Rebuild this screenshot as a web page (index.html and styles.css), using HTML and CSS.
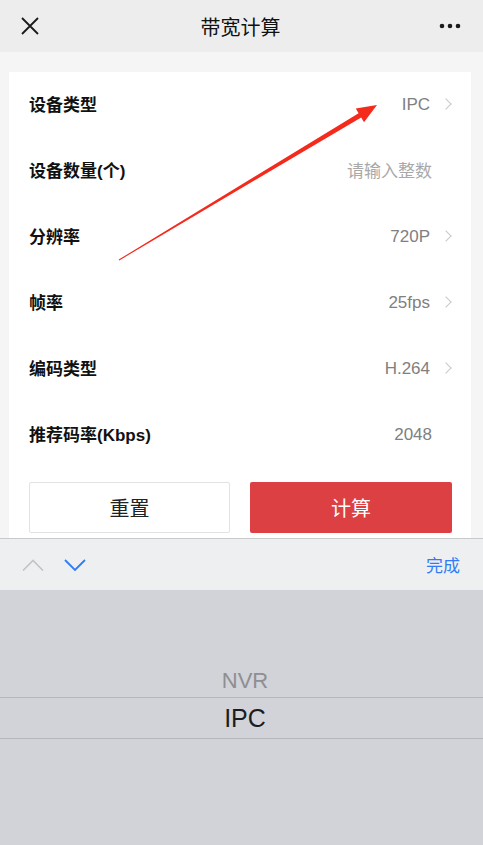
FILE: index.html
```html
<!DOCTYPE html>
<html lang="zh-CN">
  <head>
    <meta charset="UTF-8" />
    <title>带宽计算</title>
    <link rel="stylesheet" href="styles.css">
  </head>
  <body>
    <div class="screen">
      <header class="navbar">
        <svg class="nav-close" width="20" height="20" viewBox="0 0 20 20">
          <path d="M2 2 L18 18 M18 2 L2 18" stroke="#1a1a1a" stroke-width="1.8" fill="none" />
        </svg>
        <div class="nav-title">带宽计算</div>
        <svg class="nav-more" width="22" height="6" viewBox="0 0 22 6">
          <circle cx="3" cy="3" r="2.3" fill="#1a1a1a" />
          <circle cx="11" cy="3" r="2.3" fill="#1a1a1a" />
          <circle cx="19" cy="3" r="2.3" fill="#1a1a1a" />
        </svg>
      </header>

      <main class="content">
        <div class="card">
          <div class="row">
            <span class="label">设备类型</span>
            <span class="value">IPC</span>
            <span class="chevron"></span>
          </div>
          <div class="row">
            <span class="label">设备数量(个)</span>
            <span class="value placeholder">请输入整数</span>
            <span class="chevron none"></span>
          </div>
          <div class="row">
            <span class="label">分辨率</span>
            <span class="value">720P</span>
            <span class="chevron"></span>
          </div>
          <div class="row">
            <span class="label">帧率</span>
            <span class="value">25fps</span>
            <span class="chevron"></span>
          </div>
          <div class="row">
            <span class="label">编码类型</span>
            <span class="value">H.264</span>
            <span class="chevron"></span>
          </div>
          <div class="row">
            <span class="label">推荐码率(Kbps)</span>
            <span class="value">2048</span>
            <span class="chevron none"></span>
          </div>

          <div class="actions">
            <button class="btn btn-reset">重置</button>
            <button class="btn btn-calc">计算</button>
          </div>
        </div>
      </main>

      <div class="toolbar">
        <svg width="22" height="12" viewBox="0 0 22 12">
          <path d="M1 11.5 L11 1.5 L21 11.5" stroke="#c4c4c6" stroke-width="1.6" fill="none" />
        </svg>
        <svg class="tb-down" width="22" height="12" viewBox="0 0 22 12">
          <path d="M1 1 L11 11 L21 1" stroke="#2f7cf6" stroke-width="1.8" fill="none" />
        </svg>
        <span class="tb-done">完成</span>
      </div>

      <div class="picker">
        <div class="pick-item">NVR</div>
        <div class="pick-item selected">IPC</div>
      </div>

      <!-- 标注箭头 -->
      <svg class="annot" width="483" height="845" viewBox="0 0 483 845">
        <polygon fill="#f42a1c"
          points="118.7,259.6 358.6,113.2 355.8,108.4 377,105 364,122.2 361.2,117.4 119.3,260.4" />
      </svg>
    </div>
  </body>
</html>
```

FILE: styles.css
```css
body {
  margin: 0;
  padding: 0;
  font-family: "Liberation Sans", "Noto Sans CJK SC", sans-serif;
}
.screen {
  position: relative;
  width: 483px;
  height: 845px;
  overflow: hidden;
  background: #f5f5f5;
  display: flex;
  flex-direction: column;
}
.navbar {
  height: 52px;
  flex-shrink: 0;
  background: #ededed;
  display: flex;
  align-items: center;
  padding: 0 22px 0 20px;
}
.nav-close {
  flex-shrink: 0;
}
.nav-title {
  flex: 1;
  text-align: center;
  font-size: 20px;
  color: #111;
  padding-left: 2px;
}
.nav-more {
  flex-shrink: 0;
}
.content {
  height: 486px;
  flex-shrink: 0;
  overflow: hidden;
  padding: 20px 12px 0 9px;
  box-sizing: border-box;
}
.card {
  background: #fff;
  padding: 0 19px 40px 20px;
}
.row {
  height: 66px;
  display: flex;
  align-items: center;
}
.label {
  flex: 1;
  font-size: 17px;
  font-weight: bold;
  color: #111;
  margin-top: -3px;
}
.value {
  font-size: 17px;
  color: #808080;
}
.value.placeholder {
  color: #a8a8a8;
  margin-top: -3px;
}
.chevron {
  width: 22px;
  height: 12px;
  position: relative;
}
.chevron::after {
  content: "";
  position: absolute;
  right: 2px;
  top: 1px;
  width: 7px;
  height: 7px;
  border-top: 1.4px solid #c8c8c8;
  border-right: 1.4px solid #c8c8c8;
  transform: rotate(45deg);
}
.chevron.none::after {
  display: none;
}
.chevron.none {
  width: 20px;
}
.actions {
  display: grid;
  grid-template-columns: 201px 202px;
  gap: 20px;
  margin-top: 14px;
}
.btn {
  height: 51px;
  font-size: 20px;
  font-family: "Noto Sans CJK SC", sans-serif;
  border-radius: 2px;
  cursor: pointer;
}
.btn-reset {
  background: #fff;
  color: #222;
  border: 1px solid #e2e2e2;
}
.btn-calc {
  background: #dc4043;
  color: #fff;
  border: none;
}
.toolbar {
  height: 51px;
  flex-shrink: 0;
  background: #eeeff1;
  border-top: 1px solid #c9c9cc;
  display: flex;
  align-items: center;
  padding: 0 23px 0 22px;
}
.tb-down {
  margin-left: 20px;
}
.tb-done {
  margin-left: auto;
  font-size: 17px;
  color: #2f7cf6;
  font-family: "Noto Sans CJK SC", sans-serif;
}
.picker {
  flex: 1;
  background: #d1d3d8;
  padding-top: 72px;
}
.pick-item {
  height: 35px;
  line-height: 38px;
  text-align: center;
  padding-left: 7px;
  font-size: 22px;
  color: #8e8e93;
}
.pick-item.selected {
  height: 40px;
  line-height: 40px;
  border-top: 1px solid #b7b8bd;
  border-bottom: 1px solid #b7b8bd;
  font-size: 25px;
  color: #1c1c1e;
}
.annot {
  position: absolute;
  left: 0;
  top: 0;
  pointer-events: none;
}
```
